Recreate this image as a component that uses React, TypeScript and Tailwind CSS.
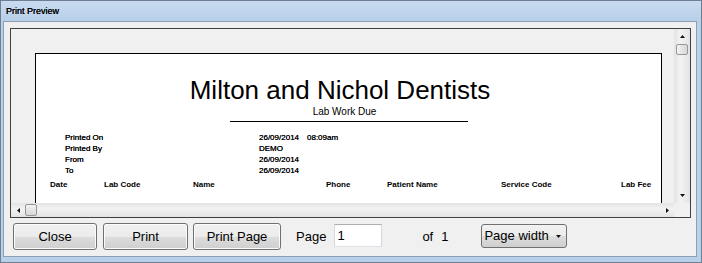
import React from "react";

type Dir = "up" | "down" | "left" | "right";

function Arrow({ dir }: { dir: Dir }) {
  const vertical = dir === "up" || dir === "down";
  const w = vertical ? 5 : 3;
  const h = vertical ? 3 : 5;
  const pts = {
    up: "0,3 5,3 2.5,0",
    down: "0,0 5,0 2.5,3",
    left: "3,0 3,5 0,2.5",
    right: "0,0 0,5 3,2.5",
  }[dir];
  return (
    <svg width={w} height={h} viewBox={`0 0 ${w} ${h}`}>
      <polygon points={pts} fill="#111" />
    </svg>
  );
}

const btn =
  "h-[27px] rounded-[3px] border border-[#707070] bg-[linear-gradient(to_bottom,#f2f2f2_0%,#ebebeb_50%,#dddddd_50%,#cfcfcf_100%)] shadow-[inset_0_0_0_1px_#fbfbfb] text-[13px] text-black flex items-center justify-center";

const info = [
  ["Printed On", "26/09/2014", "08:09am"],
  ["Printed By", "DEMO", ""],
  ["From", "26/09/2014", ""],
  ["To", "26/09/2014", ""],
];

const columns = [
  { label: "Date", w: "w-[54px]" },
  { label: "Lab Code", w: "w-[89px]" },
  { label: "Name", w: "w-[133px]" },
  { label: "Phone", w: "w-[61px]" },
  { label: "Patient Name", w: "w-[114px]" },
  { label: "Service Code", w: "w-[120px]" },
  { label: "Lab Fee", w: "w-[40px]" },
];

export default function App() {
  return (
    <div className="w-[702px] h-[263px] flex flex-col overflow-hidden border border-[#6f7e91] bg-[#b9d0ea] font-['Liberation_Sans',Arial,sans-serif]">
      {/* Title bar */}
      <div className="h-[20px] shrink-0 flex items-center pl-[5px] pt-[2px] bg-[linear-gradient(to_bottom,#c8dbf0,#b8cfe9)] text-[9px] text-black [text-shadow:0_0_0.5px_#000]">
        Print Preview
      </div>

      {/* Client area */}
      <div className="ml-[2px] mr-[4px] mb-[5px] h-[236px] border border-[#8d9fb4] bg-[#f0f0f0] pl-[6px] pr-[5px] pt-[6px]">
        {/* Preview panel */}
        <div className="h-[190px] flex flex-col border border-[#404040]">
          <div className="flex h-[174px]">
            <div className="flex-1 overflow-hidden bg-[#f0f0f0] pl-[24px] pt-[24px]">
              <div className="w-[627px] h-[300px] border border-black bg-white text-black">
                <div className="pt-[21px] pr-[17px] text-center text-[26px] leading-[30px]">
                  Milton and Nichol Dentists
                </div>
                <div className="mt-[1px] pr-[8px] text-center text-[10px] leading-[12px]">
                  Lab Work Due
                </div>
                <div className="mx-auto mt-[3px] h-[1px] w-[238px] bg-black" />
                <div className="mt-[10px] pl-[29px] grid grid-cols-[194px_48px_auto] text-[8px] leading-[11px] [text-shadow:0_0_0.4px_#000]">
                  {info.map(([label, value, extra]) => (
                    <React.Fragment key={label}>
                      <span>{label}</span>
                      <span>{value}</span>
                      <span>{extra}</span>
                    </React.Fragment>
                  ))}
                </div>
                <div className="mt-[3px] pl-[14px] flex text-[8px] leading-[11px] font-bold">
                  {columns.map((c) => (
                    <span key={c.label} className={`${c.w} shrink-0 whitespace-nowrap`}>
                      {c.label}
                    </span>
                  ))}
                </div>
              </div>
            </div>

            {/* Vertical scrollbar */}
            <div className="w-[16px] flex flex-col bg-[linear-gradient(to_right,#e3e3e3,#f2f2f2_40%,#eeeeee_60%,#e3e3e3)]">
              <div className="h-[15px] flex items-center justify-center">
                <Arrow dir="up" />
              </div>
              <div className="mx-[2px] h-[11px] rounded-[2px] border border-[#979797] bg-[linear-gradient(to_right,#f4f4f4,#e4e4e4_50%,#d8d8d8)]" />
              <div className="flex-1" />
              <div className="h-[15px] flex items-center justify-center">
                <Arrow dir="down" />
              </div>
            </div>
          </div>

          {/* Horizontal scrollbar */}
          <div className="flex h-[14px]">
            <div className="flex-1 flex items-center bg-[linear-gradient(to_bottom,#e3e3e3,#f2f2f2_40%,#eeeeee_60%,#e3e3e3)]">
              <div className="w-[14px] flex items-center justify-center">
                <Arrow dir="left" />
              </div>
              <div className="h-[12px] w-[12px] rounded-[2px] border border-[#979797] bg-[linear-gradient(to_bottom,#f4f4f4,#e4e4e4_50%,#d8d8d8)]" />
              <div className="flex-1" />
              <div className="w-[14px] flex items-center justify-center">
                <Arrow dir="right" />
              </div>
            </div>
            <div className="w-[16px] bg-[#f0f0f0]" />
          </div>
        </div>

        {/* Button row */}
        <div className="mt-[5px] ml-[3px] flex items-start text-[13px] text-black">
          <button className={`${btn} w-[84px]`}>Close</button>
          <button className={`${btn} w-[85px] ml-[6px]`}>Print</button>
          <button className={`${btn} w-[88px] ml-[5px]`}>Print Page</button>
          <span className="ml-[15px] leading-[27px]">Page</span>
          <div className="ml-[8px] mt-[1px] h-[23px] w-[48px] flex items-center border border-[#abadb3] border-b-[#dde2e8] border-l-[#d5d8de] border-r-[#d5d8de] bg-white pl-[2px]">
            1
          </div>
          <span className="ml-[40px] leading-[27px]">of</span>
          <span className="ml-[8px] leading-[27px]">1</span>
          <div className="ml-[33px] mt-[1px] h-[24px] w-[86px] flex items-center justify-between rounded-[3px] border border-[#707070] bg-[linear-gradient(to_bottom,#f2f2f2_0%,#ebebeb_50%,#dddddd_50%,#cfcfcf_100%)] pl-[2px] pr-[5px]">
            <span>Page width</span>
            <Arrow dir="down" />
          </div>
        </div>
      </div>
    </div>
  );
}
